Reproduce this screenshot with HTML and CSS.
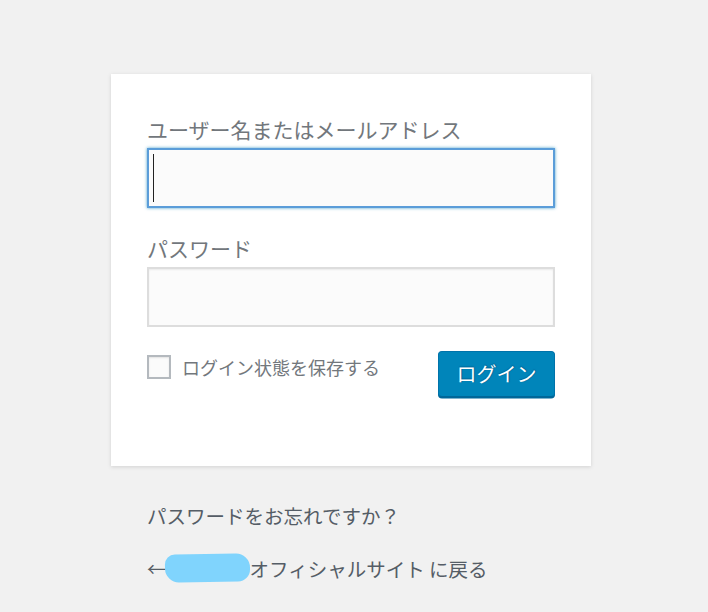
FILE: index.html
```html
<!DOCTYPE html>
<html lang="ja">
<head>
<meta charset="utf-8">
<title>ログイン</title>
<link rel="stylesheet" href="styles.css">
</head>
<body>
<div class="login">
  <form class="card">
    <label class="field-label">ユーザー名またはメールアドレス</label>
    <div class="input focused"><span class="caret"></span></div>
    <label class="field-label">パスワード</label>
    <div class="input"></div>
    <div class="submit-row">
      <label class="remember"><span class="checkbox"></span><span class="remember-text">ログイン状態を保存する</span></label>
      <button type="button" class="button">ログイン</button>
    </div>
  </form>
  <p class="nav"><a href="#">パスワードをお忘れですか？</a></p>
  <p class="back"><a href="#">←<span class="blob"></span>オフィシャルサイト に戻る</a></p>
</div>
</body>
</html>
```

FILE: styles.css
```css
html, body {
  margin: 0;
  padding: 0;
  background: #f1f1f1;
  font-family: "Noto Sans CJK JP", "Noto Sans", sans-serif;
}

.login {
  width: 480px;
  margin-left: 111px;
  padding-top: 74px;
}

.card {
  display: flex;
  flex-direction: column;
  box-sizing: border-box;
  width: 480px;
  background: #fff;
  padding: 39px 36px 69px;
  box-shadow: 0 1px 4px rgba(0, 0, 0, 0.13);
}

.field-label {
  display: block;
  font-size: 21px;
  line-height: 32px;
  color: #72777c;
}

.input {
  box-sizing: border-box;
  width: 408px;
  height: 60px;
  margin: 3px 0 24px;
  border: 2px solid #dddddd;
  background: #fbfbfb;
  box-shadow: inset 0 1px 2px rgba(0, 0, 0, 0.07);
  padding: 4px 4px;
}

.input.focused {
  border-color: #5b9dd9;
  box-shadow: 0 0 3px rgba(30, 140, 190, 0.8);
}

.caret {
  display: block;
  width: 1px;
  height: 48px;
  background: #222;
}

.submit-row {
  display: flex;
  justify-content: space-between;
  align-items: flex-start;
}

.remember {
  display: flex;
  align-items: center;
  gap: 11px;
  margin-top: 4px;
  color: #72777c;
  font-size: 18px;
  line-height: 24px;
}

.checkbox {
  box-sizing: border-box;
  width: 24px;
  height: 24px;
  border: 2px solid #b4b9be;
  background: #fbfbfb;
  box-shadow: inset 0 1px 2px rgba(0, 0, 0, 0.1);
}

.button {
  box-sizing: border-box;
  width: 117px;
  height: 46px;
  padding: 0 0 2px;
  background: #0085ba;
  border: 1.5px solid #0073aa;
  border-bottom-color: #006799;
  border-radius: 4px;
  box-shadow: 0 1.5px 0 #006799;
  color: #fff;
  font-family: "Noto Sans CJK JP", sans-serif;
  font-size: 20px;
  text-shadow: 0 -1px 1px #006799, 1px 0 1px #006799;
}

.nav, .back {
  margin: 0;
  padding: 0 36px;
  font-size: 19.5px;
  line-height: 29px;
}

.nav {
  margin-top: 35px;
}

.back {
  margin-top: 24px;
}

.nav a, .back a {
  color: #555d66;
  text-decoration: none;
}

.blob {
  display: inline-block;
  width: 85px;
  height: 28px;
  margin: 0 0 0 -2px;
  vertical-align: -5px;
  background: #80d4fd;
  border-radius: 10px 14px 12px 14px;
  transform: rotate(-1deg);
}
```
